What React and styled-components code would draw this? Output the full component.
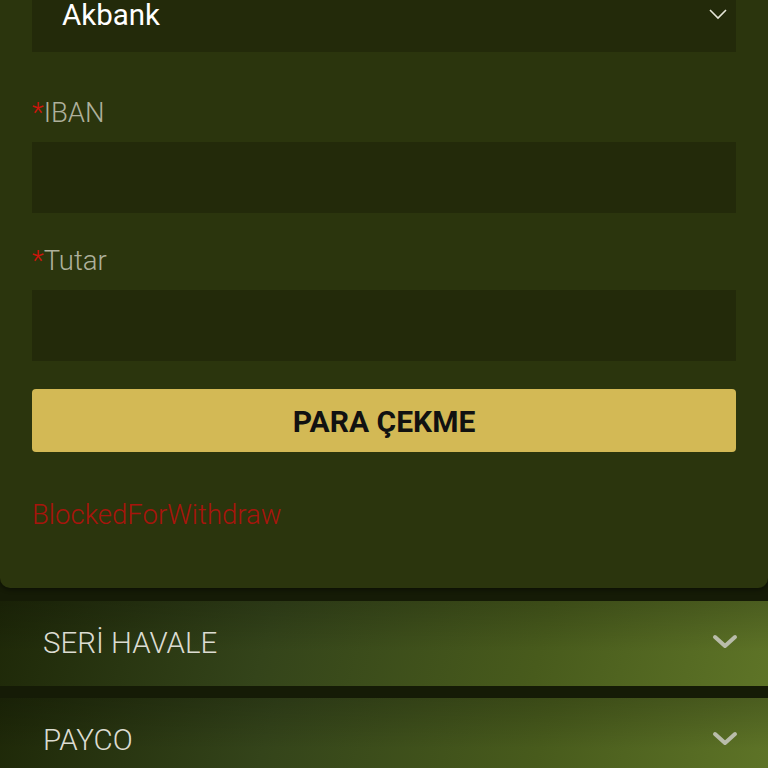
import React from "react";
import styled, { createGlobalStyle } from "styled-components";

const GlobalStyle = createGlobalStyle`
  html, body {
    margin: 0;
    padding: 0;
    background: #151b06;
    font-family: Roboto, "Noto Sans", sans-serif;
    overflow: hidden;
  }
  * { box-sizing: border-box; }
`;

const methods = ["SERİ HAVALE", "PAYCO"];

function Chevron({ thin }) {
  return thin ? (
    <svg width="20" height="12" viewBox="0 0 20 12">
      <polyline points="2,2 10,10 18,2" fill="none" stroke="#e6e6d8" strokeWidth="1.6" />
    </svg>
  ) : (
    <svg width="26" height="16" viewBox="0 0 26 16">
      <polyline
        points="3,3 13,12 23,3"
        fill="none"
        stroke="#b9bcaa"
        strokeWidth="4"
        strokeLinecap="round"
        strokeLinejoin="round"
      />
    </svg>
  );
}

export default function App() {
  return (
    <Page>
      <GlobalStyle />
      <Panel>
        <Select>
          <span>Akbank</span>
          <Chevron thin />
        </Select>
        <Label $first>
          <Star>*</Star>IBAN
        </Label>
        <Input type="text" />
        <Label>
          <Star>*</Star>Tutar
        </Label>
        <Input type="text" />
        <Button type="button">PARA ÇEKME</Button>
        <Error>BlockedForWithdraw</Error>
      </Panel>
      {methods.map((m) => (
        <Method key={m}>
          <span>{m}</span>
          <Chevron />
        </Method>
      ))}
    </Page>
  );
}

const Page = styled.main`
  width: 768px;
  height: 768px;
  display: flex;
  flex-direction: column;
  gap: 12px;
`;

const Panel = styled.section`
  background: #2b350d;
  border-radius: 0 0 10px 10px;
  padding: 0 32px 58px;
  display: flex;
  flex-direction: column;
  box-shadow: 0 2px 4px rgba(0, 0, 0, 0.4);
  margin-bottom: 1px;
`;

const Select = styled.div`
  margin-top: -19px;
  height: 71px;
  background: #232a0a;
  display: flex;
  align-items: center;
  justify-content: space-between;
  padding: 0 8px 0 30px;
  color: #ffffff;
  font-size: 29.5px;
  span {
    margin-top: -3px;
  }
  svg {
    margin-top: -6px;
  }
`;

const Label = styled.label`
  margin: ${(p) => (p.$first ? "46px" : "33px")} 0 14px;
  line-height: 30px;
  height: 30px;
  font-size: 27.5px;
  font-weight: 300;
  color: #aeb09c;
`;

const Star = styled.span`
  color: #d0140c;
`;

const Input = styled.input`
  height: 71px;
  border: none;
  outline: none;
  background: #232a0a;
  color: #fff;
  font-size: 24px;
  padding: 0 16px;
`;

const Button = styled.button`
  margin-top: 28px;
  height: 63px;
  border: none;
  border-radius: 4px;
  background: #d3b955;
  color: #111;
  font-family: Roboto, sans-serif;
  font-weight: 700;
  font-size: 30px;
  padding-top: 2px;
`;

const Error = styled.div`
  margin-top: 48px;
  line-height: 30px;
  font-size: 27.5px;
  font-weight: 300;
  color: #a8140c;
`;

const Method = styled.div`
  flex: 0 0 85px;
  display: flex;
  align-items: center;
  justify-content: space-between;
  padding: 0 30px 0 43px;
  background:
    linear-gradient(180deg, rgba(0, 0, 0, 0.18) 0%, rgba(0, 0, 0, 0) 60%),
    linear-gradient(105deg, #1e2808 0%, #34441a 35%, #485b1c 70%, #5e7427 100%);
  color: #dcdcd2;
  font-size: 29.5px;
  font-weight: 300;
  span {
    margin-top: -2px;
  }
  svg {
    margin-top: -4px;
  }
`;
